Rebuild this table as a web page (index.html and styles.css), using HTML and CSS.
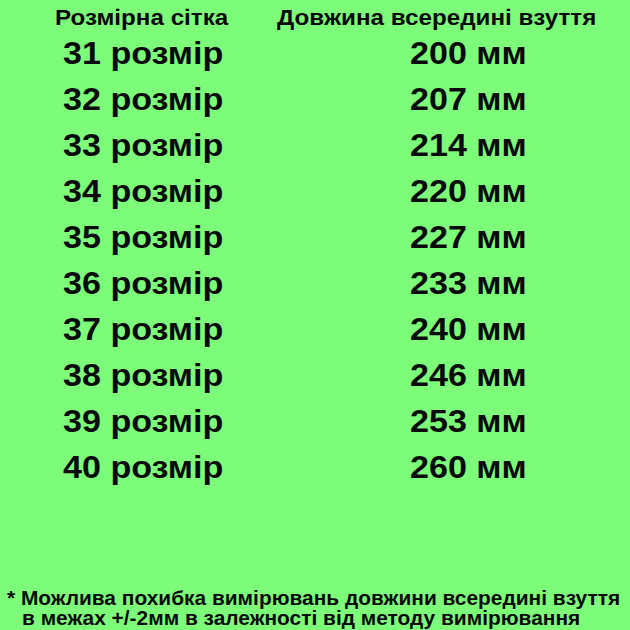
FILE: index.html
```html
<!DOCTYPE html>
<html lang="uk">
<head>
<meta charset="utf-8">
<link rel="stylesheet" href="styles.css">
</head>
<body>
<div class="page">
  <div class="head">
    <span class="h1"><span class="wide">Розмірна сітка</span></span>
    <span class="h2"><span class="wide">Довжина всередині взуття</span></span>
  </div>
  <div class="rows">
    <div class="row"><span class="size"><span class="wide">31 розмір</span></span><span class="len"><span class="wide">200 мм</span></span></div>
    <div class="row"><span class="size"><span class="wide">32 розмір</span></span><span class="len"><span class="wide">207 мм</span></span></div>
    <div class="row"><span class="size"><span class="wide">33 розмір</span></span><span class="len"><span class="wide">214 мм</span></span></div>
    <div class="row"><span class="size"><span class="wide">34 розмір</span></span><span class="len"><span class="wide">220 мм</span></span></div>
    <div class="row"><span class="size"><span class="wide">35 розмір</span></span><span class="len"><span class="wide">227 мм</span></span></div>
    <div class="row"><span class="size"><span class="wide">36 розмір</span></span><span class="len"><span class="wide">233 мм</span></span></div>
    <div class="row"><span class="size"><span class="wide">37 розмір</span></span><span class="len"><span class="wide">240 мм</span></span></div>
    <div class="row"><span class="size"><span class="wide">38 розмір</span></span><span class="len"><span class="wide">246 мм</span></span></div>
    <div class="row"><span class="size"><span class="wide">39 розмір</span></span><span class="len"><span class="wide">253 мм</span></span></div>
    <div class="row"><span class="size"><span class="wide">40 розмір</span></span><span class="len"><span class="wide">260 мм</span></span></div>
  </div>
  <div class="note">
    <p class="line1"><span class="fine">* Можлива похибка вимірювань довжини всередині взуття</span></p>
    <p class="line2"><span class="fine">в межах +/-2мм в залежності від методу вимірювання</span></p>
  </div>
</div>
</body>
</html>
```
FILE: styles.css
```css
html, body {
  margin: 0;
  padding: 0;
  background: #7dfc7a;
}
body {
  font-family: "Liberation Sans", Arial, sans-serif;
  font-weight: bold;
  color: #0a0a0a;
}
.page {
  width: 630px;
  height: 630px;
  display: flex;
  flex-direction: column;
  overflow: hidden;
}
.wide {
  display: inline-block;
  transform: scaleX(1.1);
  transform-origin: left center;
}
.fine {
  display: inline-block;
  transform: scaleX(1.045);
  transform-origin: left center;
}
.head {
  display: flex;
  padding-left: 55px;
  padding-top: 4px;
  font-size: 22px;
  line-height: 27px;
  white-space: nowrap;
}
.h1 {
  width: 222px;
}
.rows {
  display: flex;
  flex-direction: column;
}
.row {
  display: flex;
  padding-left: 63px;
  font-size: 31px;
  line-height: 46px;
  height: 46px;
  white-space: nowrap;
}
.size {
  width: 347px;
}
.note {
  margin-top: auto;
  font-family: "Liberation Sans", Arial, sans-serif;
  font-size: 20px;
  line-height: 20px;
  padding-bottom: 2px;
}
.note p {
  margin: 0;
  white-space: nowrap;
}
.line1 {
  padding-left: 7px;
}
.line2 {
  padding-left: 22px;
}
```
